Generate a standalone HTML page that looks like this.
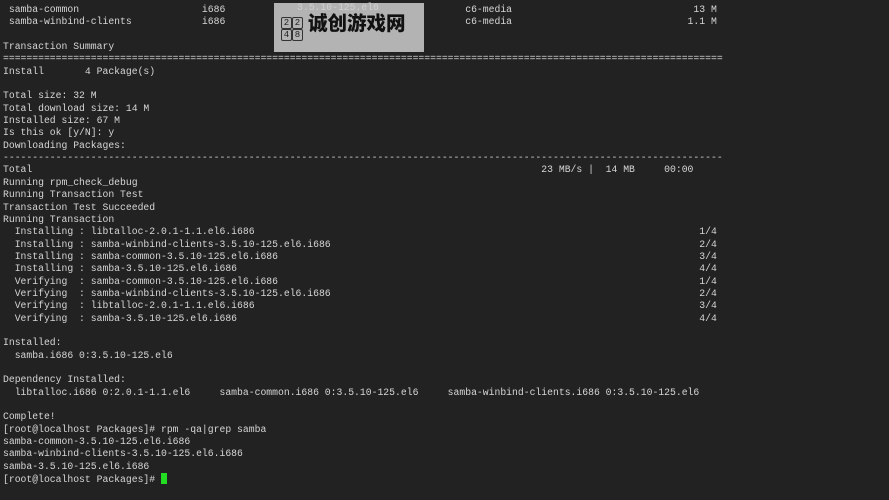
<!DOCTYPE html>
<html><head><meta charset="utf-8"><style>
html,body{margin:0;padding:0;background:#222;width:889px;height:500px;overflow:hidden}
pre{position:absolute;left:3px;top:4px;margin:0;font-family:"Liberation Mono",monospace;font-size:9.75px;line-height:12.35px;color:#d6d6d6;white-space:pre}
.cur{display:inline-block;width:6px;height:11px;background:#22dd22;vertical-align:-2px}
.wm{position:absolute;left:274px;top:3px;width:150px;height:49px;background:#b3b3b3}
.wm .t{position:absolute;left:34px;top:7px;font-family:"Noto Sans CJK SC",sans-serif;font-weight:900;font-size:19.5px;color:#111;line-height:24px}
.wm .f{position:absolute;left:23px;top:-1px;font-family:"Liberation Mono",monospace;font-size:9.75px;color:#d0d0d0}
.b{position:absolute;width:9px;height:10px;border:1px solid #333;border-radius:2px;font:9px "Liberation Mono",monospace;color:#222;text-align:center;line-height:10px}
</style></head><body>
<pre> samba-common                     i686            3.5.10-125.el6               c6-media                               13 M
 samba-winbind-clients            i686            3.5.10-125.el6               c6-media                              1.1 M

Transaction Summary
===========================================================================================================================
Install       4 Package(s)

Total size: 32 M
Total download size: 14 M
Installed size: 67 M
Is this ok [y/N]: y
Downloading Packages:
---------------------------------------------------------------------------------------------------------------------------
Total                                                                                       23 MB/s |  14 MB     00:00
Running rpm_check_debug
Running Transaction Test
Transaction Test Succeeded
Running Transaction
  Installing : libtalloc-2.0.1-1.1.el6.i686                                                                            1/4
  Installing : samba-winbind-clients-3.5.10-125.el6.i686                                                               2/4
  Installing : samba-common-3.5.10-125.el6.i686                                                                        3/4
  Installing : samba-3.5.10-125.el6.i686                                                                               4/4
  Verifying  : samba-common-3.5.10-125.el6.i686                                                                        1/4
  Verifying  : samba-winbind-clients-3.5.10-125.el6.i686                                                               2/4
  Verifying  : libtalloc-2.0.1-1.1.el6.i686                                                                            3/4
  Verifying  : samba-3.5.10-125.el6.i686                                                                               4/4

Installed:
  samba.i686 0:3.5.10-125.el6

Dependency Installed:
  libtalloc.i686 0:2.0.1-1.1.el6     samba-common.i686 0:3.5.10-125.el6     samba-winbind-clients.i686 0:3.5.10-125.el6

Complete!
[root@localhost Packages]# rpm -qa|grep samba
samba-common-3.5.10-125.el6.i686
samba-winbind-clients-3.5.10-125.el6.i686
samba-3.5.10-125.el6.i686
[root@localhost Packages]# <span class="cur"></span></pre>
<div class="wm">
<div class="f">3.5.10-125.el6</div>
<div class="b" style="left:7px;top:14px">2</div>
<div class="b" style="left:18px;top:14px">2</div>
<div class="b" style="left:7px;top:26px">4</div>
<div class="b" style="left:18px;top:26px">8</div>
<div class="t">诚创游戏网</div>
</div>
</body></html>
